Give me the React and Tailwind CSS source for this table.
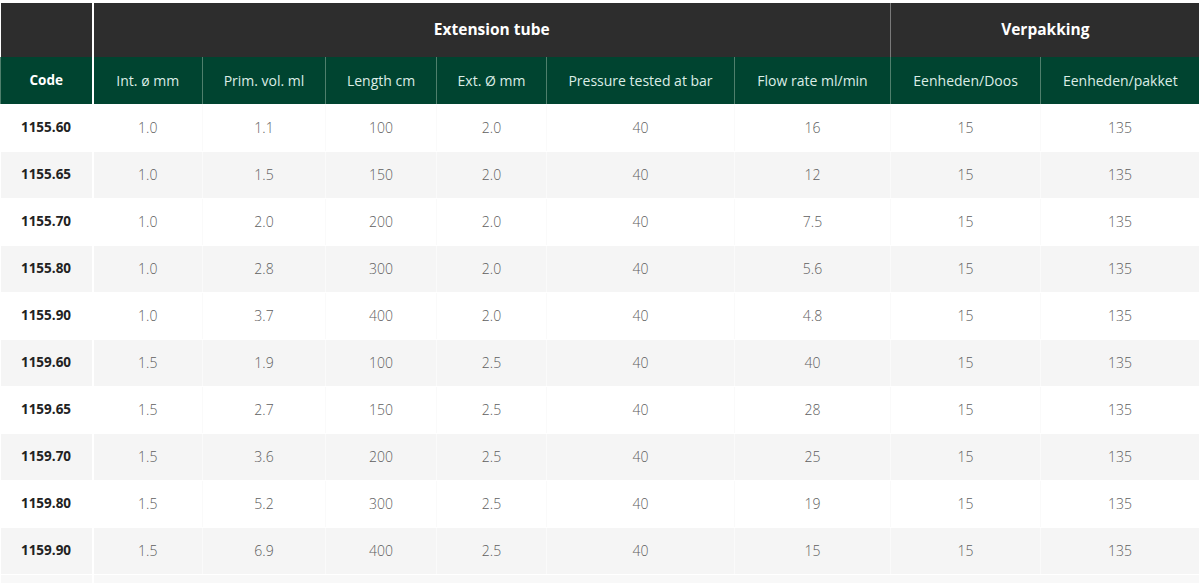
import React from 'react';

const rows = [
  ['1155.60', '1.0', '1.1', '100', '2.0', '40', '16', '15', '135'],
  ['1155.65', '1.0', '1.5', '150', '2.0', '40', '12', '15', '135'],
  ['1155.70', '1.0', '2.0', '200', '2.0', '40', '7.5', '15', '135'],
  ['1155.80', '1.0', '2.8', '300', '2.0', '40', '5.6', '15', '135'],
  ['1155.90', '1.0', '3.7', '400', '2.0', '40', '4.8', '15', '135'],
  ['1159.60', '1.5', '1.9', '100', '2.5', '40', '40', '15', '135'],
  ['1159.65', '1.5', '2.7', '150', '2.5', '40', '28', '15', '135'],
  ['1159.70', '1.5', '3.6', '200', '2.5', '40', '25', '15', '135'],
  ['1159.80', '1.5', '5.2', '300', '2.5', '40', '19', '15', '135'],
  ['1159.90', '1.5', '6.9', '400', '2.5', '40', '15', '15', '135'],
];

const widths = [92, 110, 123, 111, 110, 188, 156, 150, 159];

const subHeads = [
  'Int. ø mm',
  'Prim. vol. ml',
  'Length cm',
  'Ext. Ø mm',
  'Pressure tested at bar',
  'Flow rate ml/min',
  'Eenheden/Doos',
  'Eenheden/pakket',
];

export default function App() {
  return (
    <div className="w-[1199px] h-[583px] overflow-hidden bg-white pt-[3px]" style={{ fontFamily: '"Open Sans", "Noto Sans", sans-serif' }}>
      <table className="table-fixed border-collapse w-[1199px] text-[14px]">
        <colgroup>
          {widths.map((w, i) => (
            <col key={i} style={{ width: w }} />
          ))}
        </colgroup>
        <thead>
          <tr className="h-[54px] bg-[#2d2d2d] text-white">
            <th className="border-r-2 border-white"></th>
            <th colSpan={6} className="text-[15.5px] font-bold border-r border-[#7a7a7a]">Extension tube</th>
            <th colSpan={2} className="text-[15.5px] font-bold">Verpakking</th>
          </tr>
          <tr className="h-[47px] bg-[#004430] text-[#dcede6]">
            <th className="font-bold text-[13.5px] text-white border-l border-[#4f7f6c] border-r-2 border-r-white">Code</th>
            {subHeads.map((h, i) => (
              <th key={h} className={`font-normal whitespace-nowrap ${i < subHeads.length - 1 ? 'border-r border-[#4f7f6c]' : ''}`}>
                {h}
              </th>
            ))}
          </tr>
        </thead>
        <tbody>
          {rows.map((r, ri) => (
            <tr key={r[0]} className={`h-[47px] ${ri % 2 === 1 ? 'bg-[#f5f5f5]' : 'bg-white'}`}>
              {r.map((c, ci) => (
                <td
                  key={ci}
                  className={`text-center border-b border-white ${ci === 0 ? 'font-bold text-[13.5px] text-[#222] border-r-2' : 'font-light text-[#5e5e5e] border-r border-r-[#fafafa]'}`}
                >
                  {c}
                </td>
              ))}
            </tr>
          ))}
          <tr className="h-[47px] bg-[#f8f8f8]">
            {widths.map((w, i) => (
              <td key={i} className={i === 0 ? 'border-r-2 border-white' : ''}></td>
            ))}
          </tr>
        </tbody>
      </table>
    </div>
  );
}
